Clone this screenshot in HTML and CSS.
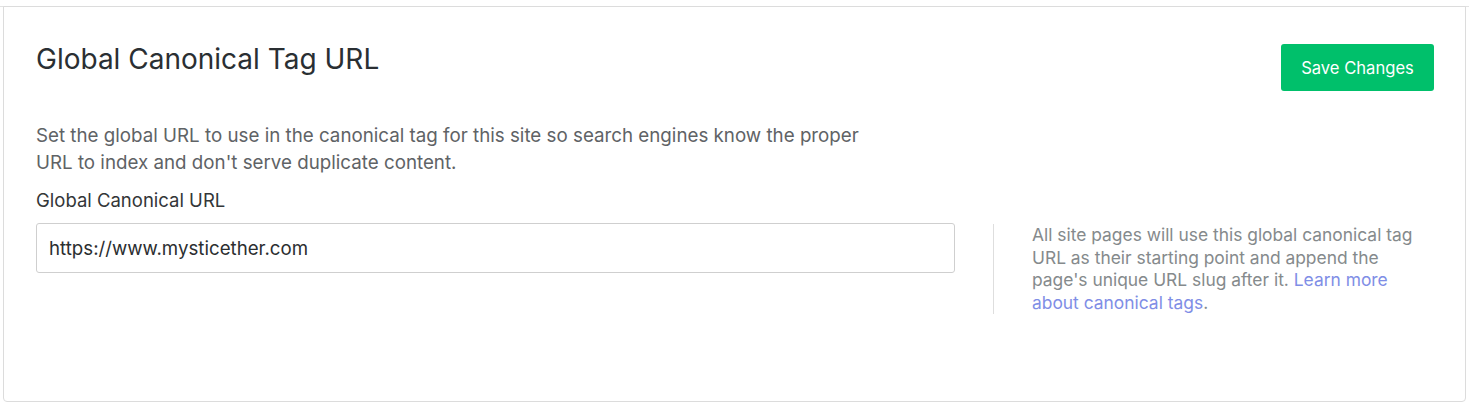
FILE: index.html
```html
<html>
    <head>
        <title>Canonical Tag</title>
        <link rel="stylesheet" href="styles.css">
    </head>
    <body>
        <div class="topline"></div>
        <div class="card">
            <div class="cardHeader">
                <h2 class="cardTitle">Global Canonical Tag URL</h2>
                <button type="button" class="btnSave">Save Changes</button>
            </div>
            <p class="descripcion">Set the global URL to use in the canonical tag for this site so search engines know the proper URL to index and don't serve duplicate content.</p>
            <div class="fila">
                <div class="colIzq">
                    <label for="urlInput" class="etiqueta">Global Canonical URL</label>
                    <input type="text" id="urlInput" class="campo" value="https://www.mysticether.com">
                </div>
                <div class="colDer">
                    <p class="ayuda">All site pages will use this global canonical tag URL as their starting point and append the page's unique URL slug after it. <a href="#" class="enlace">Learn more about canonical tags</a>.</p>
                </div>
            </div>
        </div>
    </body>
</html>
```

FILE: styles.css
```css
body
{
    margin: 0;
    background-color: #fff;
    font-family: Inter, "Noto Sans", sans-serif;
    overflow: hidden;
}
.topline
{
    height: 6px;
    border-bottom: 1px solid #e2e2e2;
}
.card
{
    margin: -1px 3px 0 3px;
    height: 396px;
    box-sizing: border-box;
    border: 1px solid #dcdcdc;
    border-radius: 0 0 4px 4px;
    padding: 37px 31px 0 32px;
}
.cardHeader
{
    display: flex;
    justify-content: space-between;
    align-items: flex-start;
}
.cardTitle
{
    margin: 0;
    font-size: 28px;
    font-weight: 400;
    color: #2a2f33;
    line-height: 30px;
}
.btnSave
{
    background-color: #00c06b;
    color: #fff;
    border: none;
    border-radius: 3px;
    width: 153px;
    height: 47px;
    font-family: Inter, "Noto Sans", sans-serif;
    font-size: 16.6px;
}
.descripcion
{
    margin: 31px 0 0 0;
    width: 860px;
    font-size: 18.75px;
    line-height: 27px;
    color: #5f6366;
}
.fila
{
    display: grid;
    grid-template-columns: 919px 1fr;
    column-gap: 38px;
    margin-top: 12px;
}
.etiqueta
{
    display: block;
    font-size: 18.5px;
    line-height: 24px;
    color: #333638;
    margin-bottom: 11px;
}
.campo
{
    width: 100%;
    height: 50px;
    box-sizing: border-box;
    border: 1px solid #cfcfcf;
    border-radius: 3px;
    padding: 0 12px;
    font-family: Inter, "Noto Sans", sans-serif;
    font-size: 18.7px;
    color: #2b2e30;
}
.colDer
{
    margin-top: 36px;
    border-left: 1px solid #dedede;
    padding-left: 38px;
    height: 90px;
}
.ayuda
{
    margin: 0;
    font-size: 17.4px;
    line-height: 22.5px;
    color: #858a8c;
}
.enlace
{
    color: #7f8ee6;
    text-decoration: none;
}
```
